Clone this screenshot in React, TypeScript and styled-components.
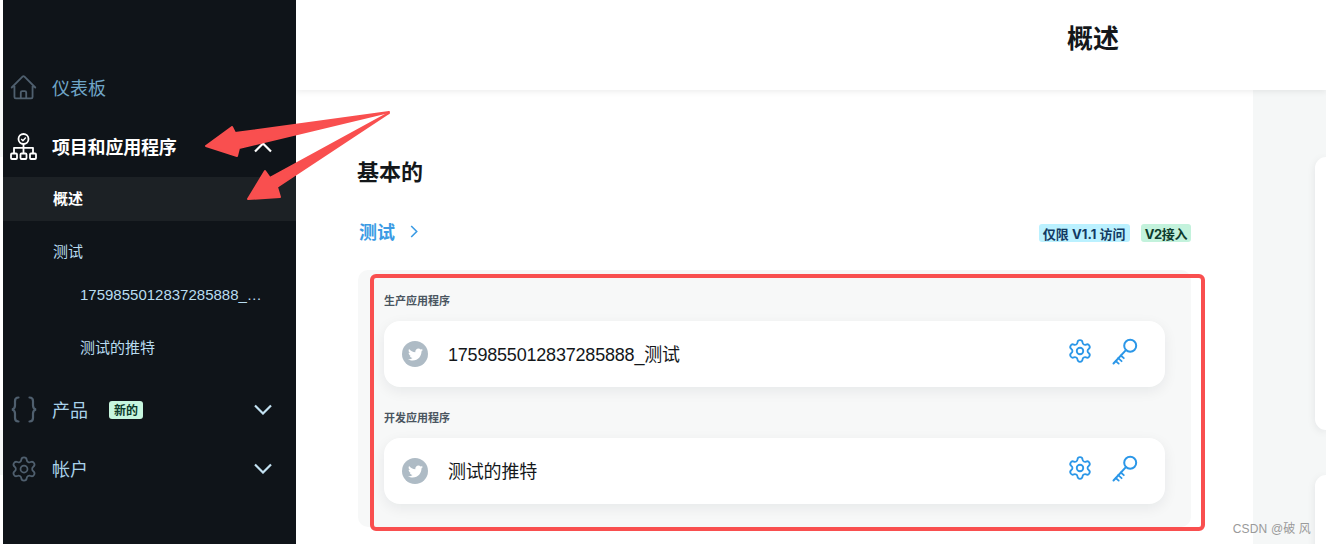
import React from "react";
import styled, { createGlobalStyle } from "styled-components";
import { Settings } from "lucide-react";
import { FaTwitter } from "react-icons/fa";

const CJK = '"Noto Sans CJK SC"';

const Global = createGlobalStyle`
  html, body { margin: 0; padding: 0; background: #fff; overflow: hidden; }
  body { font-family: Inter, ${CJK}, sans-serif; }
  * { box-sizing: border-box; }
`;

const Page = styled.div`
  position: relative;
  width: 1326px;
  height: 544px;
  display: flex;
  overflow: hidden;
`;

const EdgeStrip = styled.div`
  width: 3px;
  flex: none;
  background: linear-gradient(
    to bottom,
    #fff 0 90px,
    #f5f7f7 90px 157px,
    #fff 157px 430px,
    #f5f7f7 430px 475px,
    #fff 475px
  );
`;

const Sidebar = styled.nav`
  width: 293px;
  flex: none;
  background: #0f1419;
  padding-top: 58px;
  position: relative;
  z-index: 2;
`;

const NavRow = styled.div<{ $active?: boolean; $dim?: boolean }>`
  height: 59px;
  display: flex;
  align-items: center;
  padding: 0 24px 0 7px;
  font-size: 18px;
  font-weight: ${(p) => (p.$active ? 700 : 400)};
  letter-spacing: ${(p) => (p.$active ? "-0.2px" : "0")};
  color: ${(p) => (p.$active ? "#ffffff" : p.$dim ? "#6fa6c8" : "#a9d2ea")};
`;

const NavLabel = styled.span`
  margin-top: -2px;
`;

const NavIcon = styled.span`
  width: 27px;
  height: 27px;
  margin-right: 15px;
  flex: none;
  display: flex;
  align-items: center;
  justify-content: center;
  color: #4f5f6e;
`;

const NavIconActive = styled(NavIcon)`
  color: #ffffff;
`;

const NavBadge = styled.span`
  margin-left: 21px;
  height: 18px;
  width: 34px;
  border-radius: 3px;
  background: #c6f6de;
  color: #0b3a2a;
  font-size: 12px;
  font-weight: 700;
  display: flex;
  align-items: center;
  justify-content: center;
`;

const Chevron = styled.svg<{ $light?: boolean }>`
  margin-left: auto;
  margin-top: ${(p) => (p.$light ? "1px" : "0")};
  width: 18px;
  height: 11px;
  fill: none;
  stroke: ${(p) => (p.$light ? "#ffffff" : "#c3e2f2")};
  stroke-width: 2.2;
`;

const SubActive = styled.div`
  margin-top: 1px;
  height: 44px;
  background: #1c2125;
  display: flex;
  align-items: center;
  padding: 0 0 3px 50px;
  color: #fff;
  font-size: 15px;
  font-weight: 700;
`;

const SubRow = styled.div<{ $indent?: boolean; $top?: number }>`
  height: 44px;
  margin-top: ${(p) => p.$top ?? 0}px;
  display: flex;
  align-items: center;
  padding: 0 0 3px ${(p) => (p.$indent ? 77 : 50)}px;
  color: #b9dcf0;
  font-family: "Liberation Sans", ${CJK}, sans-serif;
  font-size: 15px;
`;

const SubGroup = styled.div`
  padding-bottom: 10px;
`;

const Main = styled.div`
  flex: 1;
  min-width: 0;
  display: flex;
  flex-direction: column;
`;

const Header = styled.header`
  height: 90px;
  flex: none;
  background: #fff;
  box-shadow: 0 2px 6px rgba(0, 0, 0, 0.07);
  display: flex;
  align-items: center;
  padding: 0 0 17px 771px;
  font-size: 26px;
  font-weight: 700;
  color: #14171a;
  position: relative;
  z-index: 1;
`;

const Body = styled.div`
  flex: 1;
  display: flex;
  min-height: 0;
`;

const Content = styled.section`
  width: 957px;
  flex: none;
  background: #fff;
  padding: 67px 62px 0;
`;

const Heading = styled.h2`
  margin: 0 0 0 -1px;
  font-size: 22px;
  line-height: 30px;
  font-weight: 700;
  color: #14171a;
`;

const ProjectRow = styled.div`
  margin-top: 32px;
  height: 24px;
  display: flex;
  align-items: center;
  padding-left: 1px;
`;

const ProjectLink = styled.span`
  font-size: 18px;
  font-weight: 700;
  color: #3b9be4;
`;

const ProjectChevron = styled.svg`
  margin-left: 15px;
  margin-right: auto;
  width: 8px;
  height: 13px;
  fill: none;
  stroke: #3b9be4;
  stroke-width: 1.6;
`;

const Tag = styled.span<{ $bg: string; $fg: string; $left: number; $track?: number }>`
  margin-left: ${(p) => p.$left}px;
  height: 18px;
  padding: 0 4px;
  border-radius: 3px;
  background: ${(p) => p.$bg};
  color: ${(p) => p.$fg};
  font-size: 13px;
  font-weight: 700;
  letter-spacing: ${(p) => p.$track ?? 0}px;
  white-space: nowrap;
  display: flex;
  align-items: center;
  position: relative;
  top: 2px;
`;

const Panel = styled.div`
  margin-top: 27px;
  background: #f7f8f8;
  border-radius: 10px;
  padding: 23px 26px 23px;
`;

const GroupLabel = styled.div<{ $top?: number }>`
  margin-top: ${(p) => p.$top ?? 0}px;
  font-size: 11px;
  line-height: 16px;
  font-weight: 700;
  color: #4a5560;
`;

const AppCard = styled.div`
  margin-top: 12px;
  height: 66px;
  width: 781px;
  background: #fff;
  border-radius: 16px;
  box-shadow: 0 4px 14px rgba(20, 30, 40, 0.07);
  display: flex;
  align-items: center;
  padding: 0 27px 0 18px;
`;

const Avatar = styled.span`
  width: 26px;
  height: 26px;
  border-radius: 50%;
  background: #aebbc5;
  color: #fff;
  display: flex;
  align-items: center;
  justify-content: center;
  flex: none;
`;

const AppName = styled.span`
  margin: -3px 0 0 20px;
  font-family: "Liberation Sans", ${CJK}, sans-serif;
  font-size: 18px;
  letter-spacing: -0.2px;
  color: #14171a;
`;

const Actions = styled.div`
  margin-left: auto;
  display: flex;
  align-items: center;
  gap: 19px;
  padding-bottom: 6px;
  color: #2b97e8;
`;

const Rail = styled.aside`
  flex: 1;
  background: #f5f7f7;
  padding: 67px 0 0 62px;
  display: flex;
  flex-direction: column;
  gap: 45px;
`;

const RailCard = styled.div<{ $h: number }>`
  height: ${(p) => p.$h}px;
  background: #fff;
  border-radius: 12px 0 0 12px;
  box-shadow: 0 2px 8px rgba(20, 30, 40, 0.08);
  flex: none;
`;

const Annotation = styled.svg`
  position: absolute;
  left: 0;
  top: 0;
  width: 1326px;
  height: 544px;
  pointer-events: none;
  z-index: 5;
`;

const RedBox = styled.div`
  position: absolute;
  left: 370px;
  top: 274px;
  width: 835px;
  height: 257px;
  border: 4px solid #f94f4f;
  border-radius: 6px;
  pointer-events: none;
  z-index: 5;
`;

const Watermark = styled.div`
  position: absolute;
  right: 15px;
  top: 521px;
  font-family: "Liberation Sans", ${CJK}, sans-serif;
  font-size: 12px;
  line-height: 16px;
  letter-spacing: 0.15px;
  color: #9a9a9a;
  z-index: 6;
`;

const HomeIcon = () => (
  <svg width="29" height="29" viewBox="0 0 24 24" fill="none" stroke="currentColor" strokeWidth="1.5" strokeLinecap="round" strokeLinejoin="round" style={{ flex: "none" }}>
    <path d="M2.25 12l8.954-8.955c.44-.439 1.152-.439 1.591 0L21.75 12M4.5 9.75v10.125c0 .621.504 1.125 1.125 1.125H9.75v-4.875c0-.621.504-1.125 1.125-1.125h2.25c.621 0 1.125.504 1.125 1.125V21h4.125c.621 0 1.125-.504 1.125-1.125V9.75M8.25 21h8.25" />
  </svg>
);

const OrgIcon = () => (
  <svg width="27" height="27" viewBox="0 0 27 27" fill="none" stroke="currentColor" strokeWidth="1.8" strokeLinejoin="round">
    <circle cx="13.5" cy="6" r="5" />
    <path d="M11.2 6l1.7 1.7 2.9-3.1" strokeWidth="1.4" />
    <path d="M13.5 11v9.5M4 20.5v-5.7h19v5.7" />
    <rect x="1" y="20.5" width="6" height="5.5" rx="1" />
    <rect x="10.5" y="20.5" width="6" height="5.5" rx="1" />
    <rect x="20" y="20.5" width="6" height="5.5" rx="1" />
  </svg>
);

const BracesIcon = () => (
  <svg width="26" height="27" viewBox="0 0 26 27" fill="none" stroke="currentColor" strokeWidth="2.2" strokeLinecap="round">
    <path d="M7.5 1.5C4.5 1.5 4 3 4 5v4.5c0 2-1 3.5-3 4 2 .5 3 2 3 4V22c0 2 .5 3.5 3.5 3.5" />
    <path d="M18.5 1.5C21.5 1.5 22 3 22 5v4.5c0 2 1 3.5 3 4-2 .5-3 2-3 4V22c0 2-.5 3.5-3.5 3.5" />
  </svg>
);

const KeyIcon = () => (
  <svg width="26" height="27" viewBox="0 0 26 27" fill="none" stroke="currentColor" strokeWidth="2" strokeLinecap="round">
    <circle cx="18.2" cy="7.8" r="6" />
    <path d="M13.9 12.1L1.5 25.5" />
    <path d="M6.2 20.2l3.4 3M3.7 23l3 2.6M8.8 17.5l3 2.7" strokeWidth="1.8" />
  </svg>
);

const Up = () => (
  <Chevron $light viewBox="0 0 18 11">
    <path d="M1 9.5L9 1.5l8 8" />
  </Chevron>
);
const Down = () => (
  <Chevron viewBox="0 0 18 11">
    <path d="M1 1.5l8 8 8-8" />
  </Chevron>
);

const App = () => (
  <Page>
    <Global />
    <EdgeStrip />
    <Sidebar>
      <NavRow $dim>
        <NavIcon><HomeIcon /></NavIcon>
        <NavLabel>仪表板</NavLabel>
      </NavRow>
      <NavRow $active>
        <NavIconActive><OrgIcon /></NavIconActive>
        <NavLabel>项目和应用程序</NavLabel>
        <Up />
      </NavRow>
      <SubActive>概述</SubActive>
      <SubGroup>
        <SubRow $top={9}>测试</SubRow>
        <SubRow $indent>1759855012837285888_…</SubRow>
        <SubRow $indent $top={8}>测试的推特</SubRow>
      </SubGroup>
      <NavRow>
        <NavIcon><BracesIcon /></NavIcon>
        <NavLabel>产品</NavLabel>
        <NavBadge>新的</NavBadge>
        <Down />
      </NavRow>
      <NavRow>
        <NavIcon><Settings size={28} strokeWidth={1.5} style={{ flex: "none" }} /></NavIcon>
        <NavLabel>帐户</NavLabel>
        <Down />
      </NavRow>
    </Sidebar>
    <Main>
      <Header>概述</Header>
      <Body>
        <Content>
          <Heading>基本的</Heading>
          <ProjectRow>
            <ProjectLink>测试</ProjectLink>
            <ProjectChevron viewBox="0 0 8 13">
              <path d="M1.2 1l5.5 5.5-5.5 5.5" />
            </ProjectChevron>
            <Tag $bg="#bbf1ff" $fg="#123a63" $left={0} $track={0.08}>仅限 V1.1 访问</Tag>
            <Tag $bg="#c3f2dc" $fg="#0d3b2c" $left={11} $track={-0.4}>V2接入</Tag>
          </ProjectRow>
          <Panel>
            <GroupLabel>生产应用程序</GroupLabel>
            <AppCard>
              <Avatar><FaTwitter size={15} /></Avatar>
              <AppName>1759855012837285888_测试</AppName>
              <Actions>
                <Settings size={26} strokeWidth={1.7} />
                <KeyIcon />
              </Actions>
            </AppCard>
            <GroupLabel $top={23}>开发应用程序</GroupLabel>
            <AppCard>
              <Avatar><FaTwitter size={15} /></Avatar>
              <AppName>测试的推特</AppName>
              <Actions>
                <Settings size={26} strokeWidth={1.7} />
                <KeyIcon />
              </Actions>
            </AppCard>
          </Panel>
        </Content>
        <Rail>
          <RailCard $h={273} />
          <RailCard $h={120} />
        </Rail>
      </Body>
    </Main>
    <Annotation viewBox="0 0 1326 544">
      <g fill="#f94f4f" stroke="#f94f4f" strokeWidth="2" strokeLinejoin="round">
        <polygon points="389,112 235,133 232,127 206,146 237,156 239,148" />
        <polygon points="389,113 270,178 265,171 248,199 280,197 277,187" />
      </g>
    </Annotation>
    <RedBox />
    <Watermark>CSDN @破 风</Watermark>
  </Page>
);

export default App;
